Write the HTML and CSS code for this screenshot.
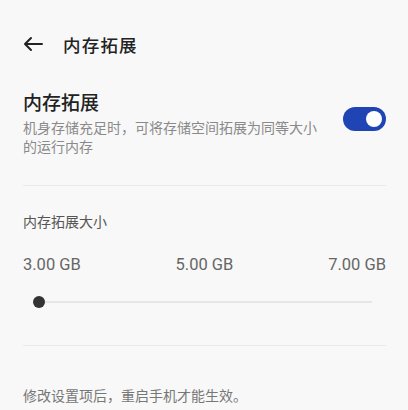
FILE: index.html
```html
<!DOCTYPE html>
<html lang="zh-CN">
<head>
<meta charset="utf-8">
<link rel="stylesheet" href="styles.css">
</head>
<body>
<div class="page">
  <header class="topbar">
    <svg class="back" width="22" height="16" viewBox="0 0 22 16" aria-hidden="true">
      <path d="M20 8H3M9 2L3 8l6 6" fill="none" stroke="#222" stroke-width="2" stroke-linecap="round" stroke-linejoin="round"/>
    </svg>
    <span class="topbar-title">内存拓展</span>
  </header>

  <section class="setting">
    <div class="setting-text">
      <div class="setting-title">内存拓展</div>
      <div class="setting-desc">机身存储充足时，可将存储空间拓展为同等大小的运行内存</div>
    </div>
    <div class="switch"><span class="knob"></span></div>
  </section>

  <div class="divider first"></div>

  <section class="size">
    <div class="size-label">内存拓展大小</div>
    <div class="values">
      <span>3.00 GB</span>
      <span>5.00 GB</span>
      <span>7.00 GB</span>
    </div>
    <div class="slider">
      <span class="thumb"></span>
      <span class="track"></span>
    </div>
  </section>

  <div class="divider second"></div>

  <p class="note">修改设置项后，重启手机才能生效。</p>
</div>
</body>
</html>
```

FILE: styles.css
```css
html, body {
  margin: 0;
  padding: 0;
  background: #f8f8f8;
}
body {
  font-family: Roboto, "Noto Sans CJK SC", sans-serif;
  color: #222;
}
.page {
  width: 408px;
  height: 410px;
  overflow: hidden;
  box-sizing: border-box;
  padding: 0 22px 0 23px;
}
.topbar {
  display: flex;
  align-items: center;
  height: 24px;
  margin-top: 32px;
}
.back {
  margin-left: -1px;
  margin-right: 19px;
}
.topbar-title {
  font-size: 17.5px;
  font-weight: 500;
  letter-spacing: 1.2px;
  color: #222;
}
.setting {
  display: flex;
  align-items: center;
  justify-content: space-between;
  margin-top: 35px;
}
.setting-text {
  width: 300px;
}
.setting-title {
  font-size: 19px;
  line-height: 26px;
  font-weight: 500;
  color: #222;
}
.setting-desc {
  margin-top: 2px;
  font-size: 14px;
  line-height: 19px;
  color: #8a8a8a;
}
.switch {
  width: 43px;
  height: 24px;
  border-radius: 12px;
  background: #1f44b4;
  display: flex;
  align-items: center;
  justify-content: flex-end;
  padding: 0 4px;
  box-sizing: border-box;
  margin-top: -10px;
}
.knob {
  width: 16px;
  height: 16px;
  border-radius: 50%;
  background: #fff;
}
.divider {
  height: 1px;
  background: #eaeaea;
}
.divider.first {
  margin-top: 28px;
}
.size-label {
  margin-top: 27px;
  font-size: 14px;
  line-height: 18px;
  color: #555;
}
.values {
  display: flex;
  justify-content: space-between;
  margin-top: 24px;
  font-size: 16.5px;
  line-height: 20px;
  color: #666;
}
.slider {
  display: flex;
  align-items: center;
  margin-top: 21px;
  padding-left: 10px;
  padding-right: 14px;
}
.thumb {
  width: 12px;
  height: 12px;
  border-radius: 50%;
  background: #333;
  flex: none;
}
.track {
  flex: 1;
  height: 2px;
  background: #e6e6e6;
}
.divider.second {
  margin-top: 37px;
}
.note {
  margin: 41px 0 0;
  font-size: 14px;
  line-height: 18px;
  color: #777;
}
```
